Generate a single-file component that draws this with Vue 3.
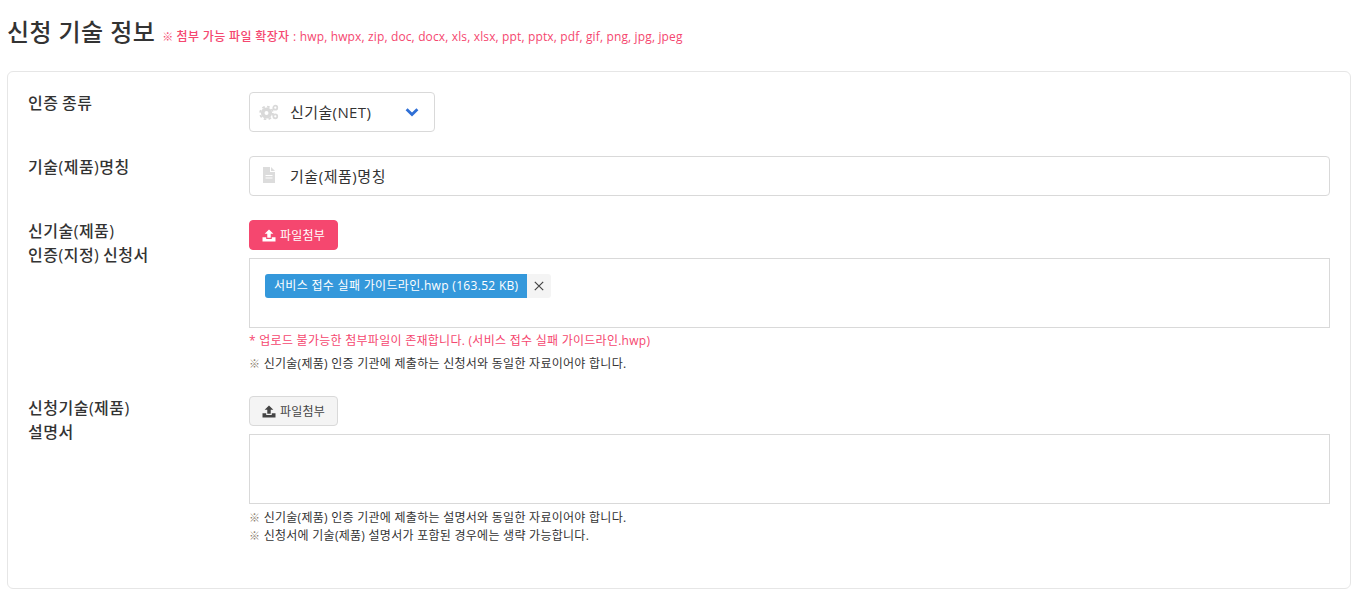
<script setup>
const uploadPath = 'M8 0.5 L13 5.5 H10 V10 H6 V5.5 H3 Z M0.5 9.5 H4.8 V11.5 H11.2 V9.5 H15.5 V14.5 H0.5 Z'
</script>

<template>
  <div class="page">
    <div class="head">
      <h2 class="title">신청 기술 정보</h2>
      <span class="ext"><span class="mark">※</span> <b>첨부 가능 파일 확장자 :</b> hwp, hwpx, zip, doc, docx, xls, xlsx, ppt, pptx, pdf, gif, png, jpg, jpeg</span>
    </div>
    <div class="card">
      <div class="row row-1">
        <div class="label">인증 종류</div>
        <div class="field">
          <div class="select">
            <svg class="ico gears" viewBox="0 0 20 16" width="20" height="16">
              <circle cx="7.5" cy="9" r="3.8" fill="none" stroke="#d9d9d9" stroke-width="3.6"/>
              <circle cx="7.5" cy="9" r="6.4" fill="none" stroke="#d9d9d9" stroke-width="1.8" stroke-dasharray="2.6 2.4"/>
              <circle cx="16.3" cy="3.7" r="2" fill="none" stroke="#d9d9d9" stroke-width="1.7"/>
              <circle cx="16.3" cy="12.3" r="2" fill="none" stroke="#d9d9d9" stroke-width="1.7"/>
            </svg>
            <span class="select-text">신기술(NET)</span>
            <svg class="chev" viewBox="0 0 14 10" width="14" height="10">
              <path d="M1.6 2.2 L7 7.6 L12.4 2.2" fill="none" stroke="#2f6fd6" stroke-width="2.8"/>
            </svg>
          </div>
        </div>
      </div>
      <div class="row row-2">
        <div class="label">기술(제품)명칭</div>
        <div class="field">
          <div class="input">
            <svg class="ico doc" viewBox="0 0 12 16" width="12" height="16">
              <path d="M0 0 H7 V5 H12 V16 H0 Z M8 0 L12 4 H8 Z M2.5 8 V9 H9.5 V8 Z M2.5 10.5 V11.5 H9.5 V10.5 Z" fill="#dcdcdc" fill-rule="evenodd"/>
            </svg>
            <span class="input-text">기술(제품)명칭</span>
          </div>
        </div>
      </div>
      <div class="row row-3">
        <div class="label">신기술(제품)<br>인증(지정) 신청서</div>
        <div class="field">
          <button class="btn btn-red">
            <svg viewBox="0 0 16 15" width="14" height="13"><path :d="uploadPath" fill="#fff"/></svg>
            <span>파일첨부</span>
          </button>
          <div class="box">
            <div class="tag-line">
              <span class="tag">서비스 접수 실패 가이드라인.hwp (163.52 KB)</span>
              <span class="tag-x">
                <svg viewBox="0 0 10 10" width="10" height="10"><path d="M0.8 0.8 L9.2 9.2 M9.2 0.8 L0.8 9.2" stroke="#444" stroke-width="1.2" fill="none"/></svg>
              </span>
            </div>
          </div>
          <p class="err">* 업로드 불가능한 첨부파일이 존재합니다. (서비스 접수 실패 가이드라인.hwp)</p>
          <p class="note note-a"><span class="ref">※</span> 신기술(제품) 인증 기관에 제출하는 신청서와 동일한 자료이어야 합니다.</p>
        </div>
      </div>
      <div class="row row-4">
        <div class="label">신청기술(제품)<br>설명서</div>
        <div class="field">
          <button class="btn btn-gray">
            <svg viewBox="0 0 16 15" width="14" height="13"><path :d="uploadPath" fill="#444"/></svg>
            <span>파일첨부</span>
          </button>
          <div class="box"></div>
          <p class="note note-b"><span class="ref">※</span> 신기술(제품) 인증 기관에 제출하는 설명서와 동일한 자료이어야 합니다.</p>
          <p class="note note-c"><span class="ref">※</span> 신청서에 기술(제품) 설명서가 포함된 경우에는 생략 가능합니다.</p>
        </div>
      </div>
    </div>
  </div>
</template>

<style scoped>
.page {
  width: 1361px;
  height: 598px;
  box-sizing: border-box;
  padding: 0 10px 0 7px;
  overflow: hidden;
  background: #fff;
  color: #333;
  font-family: "Open Sans", "Noto Sans CJK KR", sans-serif;
}
.head {
  display: flex;
  align-items: flex-start;
  height: 71px;
  padding-top: 14px;
  box-sizing: border-box;
}
.title {
  margin: 0;
  font-size: 24px;
  line-height: 35px;
  font-weight: 500;
  letter-spacing: 0.4px;
  color: #333;
}
.ext {
  margin: 14px 0 0 7px;
  font-size: 12px;
  line-height: 18px;
  letter-spacing: 0.14px;
  color: #f5476f;
}
.ext b { font-weight: 500; letter-spacing: 0.35px; }
.mark { font-size: 11px; }
.card {
  height: 518px;
  box-sizing: border-box;
  border: 1px solid #e6e6e6;
  border-radius: 6px;
  padding: 20px 20px 0;
}
.row { display: flex; }
.row-2, .row-3 { margin-top: 24px; }
.row-4 { margin-top: 23px; }
.label {
  width: 221px;
  flex: none;
  margin-top: -1px;
  font-size: 16px;
  line-height: 24px;
  font-weight: 500;
  letter-spacing: 0.5px;
  word-spacing: -1px;
  color: #333;
}
.row-4 .label { margin-top: 0; }
.field { flex: 1; min-width: 0; }
.select, .input {
  display: flex;
  align-items: center;
  height: 40px;
  box-sizing: border-box;
  border: 1px solid #d9d9d9;
  border-radius: 4px;
  font-size: 15px;
  color: #333;
}
.select { width: 186px; }
.ico { flex: none; }
.gears { margin-left: 9px; }
.select-text { margin-left: 11px; margin-bottom: 2px; flex: 1; letter-spacing: 0.4px; }
.chev { margin-right: 15px; }
.doc { margin-left: 13px; margin-top: -2px; }
.input-text { margin-left: 15px; margin-bottom: 2px; letter-spacing: 0.55px; }
.btn {
  display: flex;
  align-items: center;
  justify-content: center;
  gap: 4px;
  width: 89px;
  height: 30px;
  padding: 0;
  box-sizing: border-box;
  border-radius: 4px;
  font-family: inherit;
  font-size: 12px;
  letter-spacing: 0.2px;
}
.btn-red { background: #f5476f; border: 1px solid #f5476f; color: #fff; }
.btn-gray { background: #f4f4f4; border: 1px solid #d9d9d9; color: #444; }
.box {
  margin-top: 8px;
  height: 70px;
  box-sizing: border-box;
  border: 1px solid #d9d9d9;
}
.tag-line { display: flex; padding: 15px 0 0 15px; }
.tag {
  height: 24px;
  line-height: 24px;
  padding: 0 9px;
  background: #3498db;
  color: #fff;
  font-size: 12px;
  letter-spacing: 0.31px;
  border-radius: 3px 0 0 3px;
}
.tag-x {
  display: flex;
  align-items: center;
  justify-content: center;
  width: 24px;
  height: 24px;
  background: #f4f4f4;
  border-radius: 0 3px 3px 0;
}
.err, .note {
  margin: 0;
  font-size: 12px;
  line-height: 18px;
  letter-spacing: 0.27px;
}
.err { margin-top: 4px; color: #f5476f; }
.note { color: #333; }
.note-a, .note-b { margin-top: 5px; }
.ref { color: #8c8070; font-size: 11px; }
</style>
